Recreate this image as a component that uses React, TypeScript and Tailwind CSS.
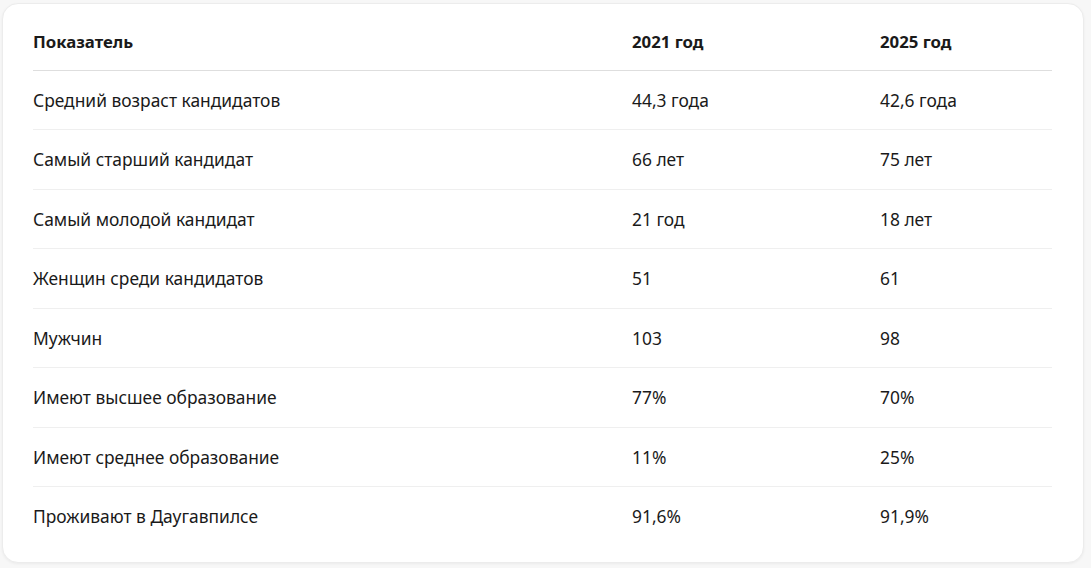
const rows: [string, string, string][] = [
  ["Средний возраст кандидатов", "44,3 года", "42,6 года"],
  ["Самый старший кандидат", "66 лет", "75 лет"],
  ["Самый молодой кандидат", "21 год", "18 лет"],
  ["Женщин среди кандидатов", "51", "61"],
  ["Мужчин", "103", "98"],
  ["Имеют высшее образование", "77%", "70%"],
  ["Имеют среднее образование", "11%", "25%"],
  ["Проживают в Даугавпилсе", "91,6%", "91,9%"],
];

export default function App() {
  return (
    <div
      className="h-[568px] w-[1091px] bg-[#f7f7f7] pt-[3px] pl-[2px]"
      style={{ fontFamily: '"Noto Sans", "Open Sans", sans-serif' }}
    >
      <div className="h-[560px] w-[1082px] rounded-[16px] border border-[#ececec] bg-white px-[30px] pt-[6px] shadow-[0_1px_3px_rgba(0,0,0,0.05)]">
        <table className="w-[1019px] border-collapse text-left text-[17.4px] text-[#1a1a1a]">
          <thead>
            <tr className="h-[60px] border-b border-[#dedede]">
              <th className="w-[599px] pt-[4px] text-[16.8px] font-bold">Показатель</th>
              <th className="w-[248px] pt-[4px] text-[16.8px] font-bold">2021 год</th>
              <th className="pt-[4px] text-[16.8px] font-bold">2025 год</th>
            </tr>
          </thead>
          <tbody>
            {rows.map(([label, a, b], i) => (
              <tr
                key={label}
                className={
                  i < rows.length - 1
                    ? "h-[59.5px] border-b border-[#efefef]"
                    : "h-[59.5px]"
                }
              >
                <td>{label}</td>
                <td>{a}</td>
                <td>{b}</td>
              </tr>
            ))}
          </tbody>
        </table>
      </div>
    </div>
  );
}
